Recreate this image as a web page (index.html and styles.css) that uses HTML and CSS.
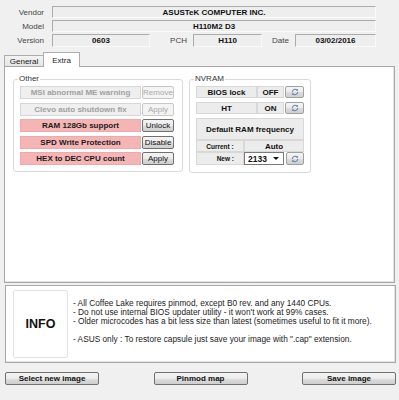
FILE: index.html
```html
<!DOCTYPE html>
<html>
<head>
<meta charset="utf-8">
<link rel="stylesheet" href="styles.css">
</head>
<body>
<div class="app">
  <div class="hdr-row">
    <div class="lbl">Vendor</div>
    <div class="field w-full">ASUSTeK COMPUTER INC.</div>
  </div>
  <div class="hdr-row">
    <div class="lbl">Model</div>
    <div class="field w-full">H110M2 D3</div>
  </div>
  <div class="hdr-row last">
    <div class="lbl">Version</div>
    <div class="field w-ver">0603</div>
    <div class="lbl-mid w-pch-l">PCH</div>
    <div class="field w-pch">H110</div>
    <div class="lbl-mid w-date-l">Date</div>
    <div class="field w-date">03/02/2016</div>
  </div>

  <div class="tabs">
    <div class="tab">General</div>
    <div class="tab active">Extra</div>
  </div>
  <div class="panel">
    <div class="group g-other">
      <div class="glabel">Other</div>
      <div class="orow">
        <div class="obox dis">MSI abnormal ME warning</div>
        <div class="btn obtn disabled">Remove</div>
      </div>
      <div class="orow">
        <div class="obox dis">Clevo auto shutdown fix</div>
        <div class="btn obtn disabled">Apply</div>
      </div>
      <div class="orow">
        <div class="obox pink">RAM 128Gb support</div>
        <div class="btn obtn">Unlock</div>
      </div>
      <div class="orow">
        <div class="obox pink">SPD Write Protection</div>
        <div class="btn obtn">Disable</div>
      </div>
      <div class="orow">
        <div class="obox pink">HEX to DEC CPU count</div>
        <div class="btn obtn">Apply</div>
      </div>
    </div>
    <div class="group g-nvram">
      <div class="glabel">NVRAM</div>
      <div class="nrow">
        <div class="nbox n-name">BIOS lock</div>
        <div class="nbox n-val">OFF</div>
        <div class="btn rbtn"><svg class="ricon" viewBox="0 0 16 16"><path d="M2.6 8A5.4 5.4 0 0 1 12.2 4.6" fill="none" stroke="#6d8cab" stroke-width="2.2"/><path d="M9.4 2.2L14.2 2.4L13.6 7.2Z" fill="#6d8cab"/><path d="M13.4 8A5.4 5.4 0 0 1 3.8 11.4" fill="none" stroke="#6d8cab" stroke-width="2.2"/><path d="M6.6 13.8L1.8 13.6L2.4 8.8Z" fill="#6d8cab"/></svg></div>
      </div>
      <div class="nrow">
        <div class="nbox n-name">HT</div>
        <div class="nbox n-val">ON</div>
        <div class="btn rbtn"><svg class="ricon" viewBox="0 0 16 16"><path d="M2.6 8A5.4 5.4 0 0 1 12.2 4.6" fill="none" stroke="#6d8cab" stroke-width="2.2"/><path d="M9.4 2.2L14.2 2.4L13.6 7.2Z" fill="#6d8cab"/><path d="M13.4 8A5.4 5.4 0 0 1 3.8 11.4" fill="none" stroke="#6d8cab" stroke-width="2.2"/><path d="M6.6 13.8L1.8 13.6L2.4 8.8Z" fill="#6d8cab"/></svg></div>
      </div>
      <div class="nrow big">
        <div class="nbox n-full">Default RAM frequency</div>
      </div>
      <div class="nrow tight">
        <div class="nbox n-sub">Current :</div>
        <div class="nbox n-auto">Auto</div>
      </div>
      <div class="nrow tight tall">
        <div class="nbox n-sub n-new">New :</div>
        <div class="select"><span>2133</span><span class="caret"></span></div>
        <div class="btn rbtn"><svg class="ricon" viewBox="0 0 16 16"><path d="M2.6 8A5.4 5.4 0 0 1 12.2 4.6" fill="none" stroke="#6d8cab" stroke-width="2.2"/><path d="M9.4 2.2L14.2 2.4L13.6 7.2Z" fill="#6d8cab"/><path d="M13.4 8A5.4 5.4 0 0 1 3.8 11.4" fill="none" stroke="#6d8cab" stroke-width="2.2"/><path d="M6.6 13.8L1.8 13.6L2.4 8.8Z" fill="#6d8cab"/></svg></div>
      </div>
    </div>
  </div>

  <div class="info">
    <div class="info-box">INFO</div>
    <div class="info-text">
      <div>- All Coffee Lake requires pinmod, except B0 rev. and any 1440 CPUs.</div>
      <div>- Do not use internal BIOS updater utility - it won't work at 99% cases.</div>
      <div>- Older microcodes has a bit less size than latest (sometimes useful to fit it more).</div>
      <div class="blank">&nbsp;</div>
      <div>- ASUS only : To restore capsule just save your image with ".cap" extension.</div>
    </div>
  </div>

  <div class="bottom">
    <div class="btn bbtn">Select new image</div>
    <div class="btn bbtn">Pinmod map</div>
    <div class="btn bbtn">Save image</div>
  </div>
</div>
</body>
</html>
```
FILE: styles.css
```css
* { box-sizing: border-box; }
html, body { margin: 0; padding: 0; }
body {
  background: #f0f0f0;
  font-family: "Liberation Sans", Arial, sans-serif;
  font-size: 8px;
  color: #1a1a1a;
  width: 399px;
  height: 400px;
  overflow: hidden;
}
.app { padding-top: 6px; }

.hdr-row { display: flex; align-items: center; height: 12px; margin-bottom: 2px; }
.hdr-row.last { height: 13px; margin-bottom: 0; }
.lbl { width: 44px; margin-right: 8px; text-align: right; color: #444; }
.lbl-mid { text-align: right; padding-right: 6px; color: #444; }
.field {
  height: 100%;
  border: 1px solid;
  border-color: #ababab #fafafa #fafafa #ababab;
  background: #eeeeee;
  font-weight: bold;
  color: #111;
  display: flex; align-items: center; justify-content: center;
}
.w-full { width: 324px; }
.w-ver { width: 98px; }
.w-pch-l { width: 43px; }
.w-pch { width: 69px; }
.w-date-l { width: 33px; }
.w-date { width: 81px; }

.tabs { display: flex; align-items: flex-end; height: 15px; margin-top: 5px; padding-left: 4px; position: relative; z-index: 1; }
.tab {
  height: 11px; margin-bottom: 1px; width: 40px;
  border: 1px solid #adadad; border-bottom: none;
  background: linear-gradient(#f3f3f3, #e5e5e5);
  display: flex; align-items: center; justify-content: center;
  color: #222;
}
.tab.active { height: 15px; margin-bottom: 0; width: 37px; margin-left: -1px; background: #fff; }

.panel {
  margin: -1px 0 0 4px; width: 391px; height: 217px;
  background: #fff; border: 1px solid #a8a8a8;
  box-shadow: inset -1px -1px 0 #e2e2e2;
  display: flex; align-items: flex-start; gap: 6px;
  padding: 12px 0 0 8px;
}
.group { position: relative; border: 1px solid #dadada; border-radius: 3px; }
.glabel { position: absolute; top: -6px; left: 4px; background: #fff; padding: 0 1px; line-height: 10px; color: #333; }
.g-other { width: 170px; height: 93px; padding: 6px 0 0 6px; }
.g-nvram { width: 122px; height: 94px; padding: 6px 0 0 6px; }

.orow { display: flex; height: 13px; margin-bottom: 3.5px; }
.obox {
  width: 121px; height: 100%;
  border: 1px solid #d6d6d6; background: #eeeeee;
  font-weight: bold;
  display: flex; align-items: center; justify-content: center;
}
.obox.dis { color: #a0a0a0; background: #efefef; }
.obox.pink { background: #f5b5b5; border-color: #eeaaaa; color: #1a1a1a; }

.btn {
  border: 1px solid #707070; border-radius: 2px;
  background: linear-gradient(#f4f4f4 0%, #ebebeb 50%, #dddddd 51%, #cfcfcf 100%);
  display: flex; align-items: center; justify-content: center;
  color: #111;
}
.btn.disabled { border-color: #c8c8c8; background: #f4f4f4; color: #a8a8a8; }
.obtn { width: 32px; margin-left: 1px; height: 100%; }

.nrow { display: flex; height: 12px; margin-bottom: 4px; }
.nrow.big { height: 22px; margin-bottom: 0; }
.nrow.tight { margin-bottom: 0; }
.nrow.tall { height: 13px; }
.nbox {
  height: 100%; border: 1px solid #d8d8d8; background: #ececec;
  font-weight: bold; color: #111;
  display: flex; align-items: center; justify-content: center;
}
.n-name { width: 61px; }
.n-val { width: 27px; }
.n-full { width: 108px; }
.n-sub { width: 48px; font-size: 6.5px; }
.n-auto { width: 60px; }
.n-new { justify-content: flex-end; padding-right: 9px; }
.rbtn { width: 19px; height: 100%; margin-left: 1px; border-color: #a0a0a0; }
.ricon { width: 8px; height: 8px; display: block; }
.select {
  width: 40px; height: 100%;
  border: 1px solid #7a7a7a; background: #fff;
  display: flex; align-items: center; justify-content: space-between;
  padding: 0 4px 0 3px;
  font-weight: bold; font-size: 8.5px; color: #111;
}
.caret { width: 0; height: 0; border-left: 3px solid transparent; border-right: 3px solid transparent; border-top: 3px solid #111; }
.tall .rbtn { margin-left: 2px; width: 18px; }

.info {
  margin: 2px 0 0 5px; width: 391px; height: 78px;
  background: #fff; border: 1px solid #a8a8a8;
  box-shadow: inset -1px -1px 0 #e2e2e2;
  display: flex; align-items: flex-start;
  padding: 4px 0 0 7px;
}
.info-box {
  width: 55px; height: 68px; border: 1px solid #e3e3e3; border-radius: 2px;
  display: flex; align-items: center; justify-content: center;
  font-weight: bold; font-size: 12.5px; color: #111;
}
.info-text { margin-left: 5px; padding-top: 9px; line-height: 9px; font-size: 8.3px; color: #222; white-space: nowrap; }

.bottom { display: flex; justify-content: space-between; margin: 9px 0 0 5px; width: 391px; }
.bbtn { width: 94px; height: 13px; font-weight: bold; }
```
